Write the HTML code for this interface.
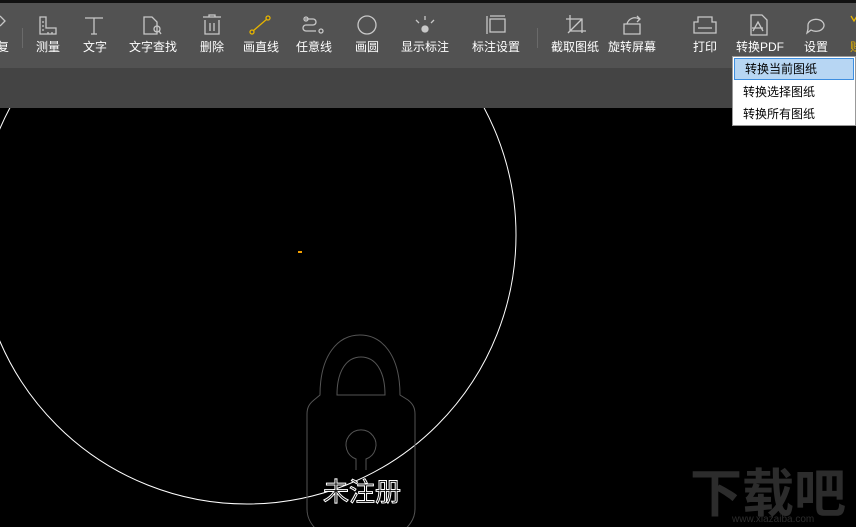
<!DOCTYPE html>
<html><head><meta charset="utf-8"><style>
*{margin:0;padding:0;box-sizing:border-box}
body{width:856px;height:527px;overflow:hidden;background:#000;font-family:"Liberation Sans","Noto Sans CJK SC",sans-serif;position:relative}
.top{position:absolute;left:0;top:0;width:856px;height:3px;background:#111}
.tb{position:absolute;left:0;top:3px;width:856px;height:65px;background:#525252}
.sub{position:absolute;left:0;top:68px;width:856px;height:40px;background:#444}
.it{position:absolute;top:38px;font-size:12px;color:#fff;transform:translateX(-50%);white-space:nowrap}
.sep{position:absolute;top:28px;width:1px;height:20px;background:#6a6a6a}
svg.ic{position:absolute;top:0;left:0}
.dd{position:absolute;left:732px;top:56px;width:124px;height:70px;background:#fff;border:1px solid #999}
.dd div{height:22px;line-height:22px;font-size:12px;padding-left:10px;color:#000}
.dd .sel{background:#b7d6f3;border:1px solid #3d8ee0;line-height:20px;margin:1px}
</style></head><body>
<div class="top"></div><div class="tb"></div><div class="sub"></div>
<svg class="ic" width="856" height="68" fill="none" stroke="#c8c8c8" stroke-width="1.3">
<path d="M0 16l5 5-5 5"/>
<path d="M40 17v17h16v-6h-10v-11z"/><path d="M42 22h2M42 26h2M42 30h2M48 32v2M52 32v2"/>
<path d="M85 18h18M94 18v16M91 34h6"/>
<path d="M144 17h8l5 5v12h-13z"/><circle cx="157" cy="29" r="3"/><path d="M159 31l2 3"/>
<path d="M203 17h18M209 17v-2h6v2M205 20v14h14v-14M210 23v8M214 23v8"/>
<path d="M253 31l14-12" stroke="#e6b400"/><circle cx="252" cy="32" r="2" stroke="#e6b400"/><circle cx="268" cy="18" r="2" stroke="#e6b400"/>
<path d="M305 19h8a3 3 0 0 1 0 6h-7a3 3 0 0 0 0 6h10"/><circle cx="306" cy="19" r="2"/><circle cx="321" cy="31" r="2"/>
<circle cx="367" cy="25" r="9"/>
<path d="M416 20l3 3M434 20l-3 3M425 16v4"/><circle cx="425" cy="29" r="3" fill="#c8c8c8"/>
<path d="M487 16v18M490 19h15v13h-15zM490 16h15"/>
<path d="M566 19h16v14M570 15v16h16M568 33l14-14"/>
<path d="M637 16l3 3-3 3M624 24h16v10h-16zM627 24a8 8 0 0 1 12-5"/>
<path d="M698 17h14v5h4v11h-22v-11h4zM698 28h14M698 17v5M712 17v5"/>
<path d="M751 15h11l5 5v15h-16z"/><path d="M753 31l5-9 5 9M752 28h11"/>
<path d="M808 25a8 6 0 1 1 3 5l-4 3 1-4z"/>
<path d="M851 16l3 5 3-5" stroke="#e6b400"/>
</svg>
<div class="sep" style="left:22px"></div><div class="sep" style="left:537px"></div>
<div class="it" style="left:3px">复</div>
<div class="it" style="left:48px">测量</div>
<div class="it" style="left:95px">文字</div>
<div class="it" style="left:153px">文字查找</div>
<div class="it" style="left:212px">删除</div>
<div class="it" style="left:261px">画直线</div>
<div class="it" style="left:314px">任意线</div>
<div class="it" style="left:367px">画圆</div>
<div class="it" style="left:425px">显示标注</div>
<div class="it" style="left:496px">标注设置</div>
<div class="it" style="left:575px">截取图纸</div>
<div class="it" style="left:632px">旋转屏幕</div>
<div class="it" style="left:705px">打印</div>
<div class="it" style="left:760px">转换PDF</div>
<div class="it" style="left:816px">设置</div>
<div class="it" style="left:856px;color:#e6b400">赚</div>
<svg style="position:absolute;left:0;top:108px" width="856" height="419">
<circle cx="247" cy="127" r="269" stroke="#fff" stroke-width="1" fill="none"/>
<path d="M298 144h4" stroke="#f5a000" stroke-width="2"/>
<path d="M320 287c0-40 18-60 40-60s40 20 40 60l8 5c5 4 7 8 7 14v95c0 20-25 35-55 35s-53-15-53-35v-95c0-6 2-10 7-14z" stroke="#555" fill="none"/>
<path d="M337 287c0-25 10-38 24-38s24 13 24 38z" stroke="#555" fill="none"/>
<path d="M356 362v-11a15 15 0 1 1 10 0v11" stroke="#555" fill="none"/>
<text x="323" y="393" font-size="26" fill="#000" stroke="#fff" stroke-width="1" font-family="Noto Sans CJK SC,sans-serif">未注册</text>
<text x="690" y="404" font-size="52" font-weight="bold" fill="#2c2c2c" font-family="Noto Sans CJK SC,sans-serif">下载吧</text>
<text x="732" y="414" font-size="10" fill="#2c2c2c">www.xiazaiba.com</text>
</svg>
<div class="dd"><div class="sel">转换当前图纸</div><div>转换选择图纸</div><div>转换所有图纸</div></div>
</body></html>
